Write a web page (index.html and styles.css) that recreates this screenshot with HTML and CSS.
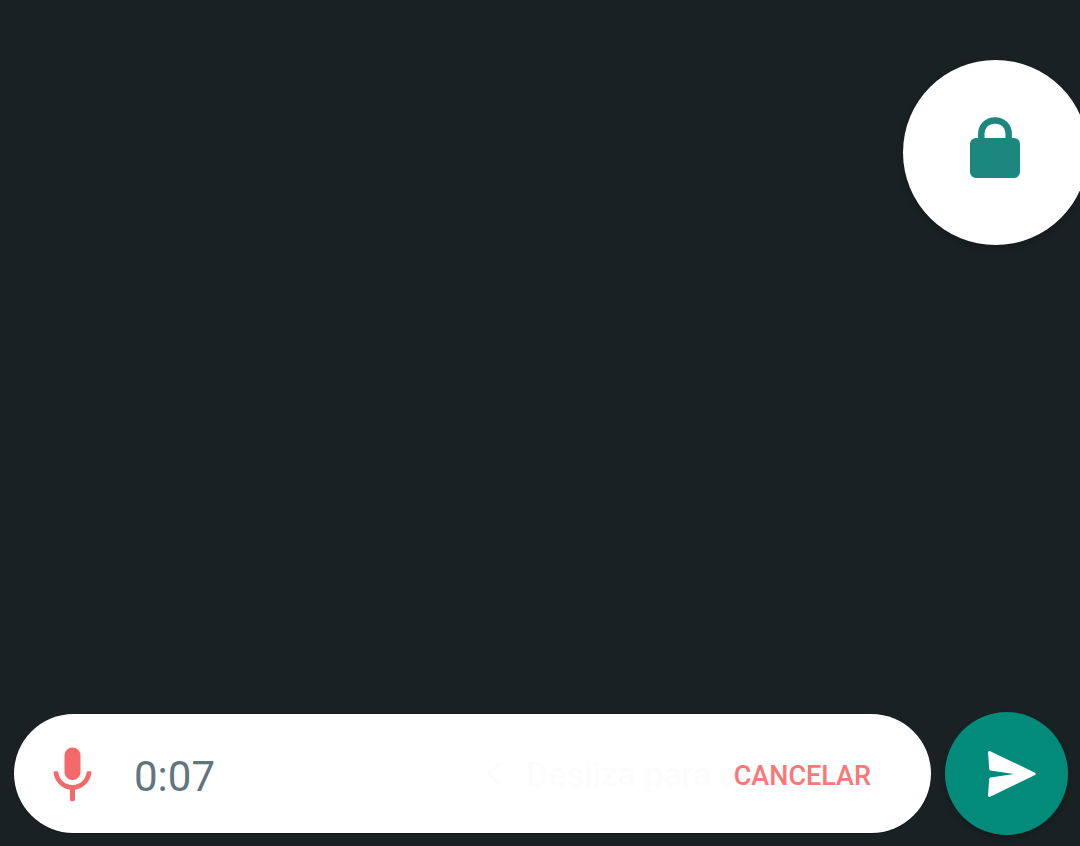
FILE: index.html
```html
<!DOCTYPE html>
<html lang="es">
<head>
<meta charset="utf-8">
<meta name="viewport" content="width=device-width, initial-scale=1">
<title>Nota de voz</title>
<link rel="stylesheet" href="styles.css">
</head>
<body>
<main class="chat">
  <button class="lock" type="button" aria-label="Bloquear grabación">
    <svg class="lock-icon" viewBox="0 0 52 62" aria-hidden="true">
      <path d="M11.300 22V17.500C11.300 9 17 3.500 25 3.500s13.700 5.500 13.700 14V22" fill="none" stroke="#1c877c" stroke-width="6.500"/>
      <rect y="21" width="50" height="40" rx="6" fill="#1c877c"/>
    </svg>
  </button>
  <footer class="recorder">
    <div class="bar">
      <svg class="mic-icon" viewBox="0 0 40 56" aria-hidden="true">
        <rect x="12.500" y="1.500" width="16" height="32.500" rx="7.800" fill="#f46a6b"/>
        <path d="M1.500 26.600q0-1.400 1.400-1.400h2q1.300 0 1.500 1.300C7.400 34 13 39 20.500 39S33.600 34 34.600 26.500q.2-1.300 1.500-1.300h2q1.400 0 1.400 1.400C38.500 35.500 31.700 42.600 23 43.800V53.500q0 1.700-1.600 1.700h-1.800q-1.600 0-1.600-1.700V43.800C9.300 42.600 2.500 35.500 1.500 26.600z" fill="#f46a6b"/>
      </svg>
      <time class="elapsed">0:07</time>
      <div class="actions">
        <span class="hint">
          <svg class="hint-icon" viewBox="0 0 16 26" aria-hidden="true"><path d="M14 2L3 13l11 11" fill="none" stroke="currentColor" stroke-width="3"/></svg>
          Desliza para cancelar
        </span>
        <button class="cancel" type="button">CANCELAR</button>
      </div>
    </div>
    <button class="send" type="button" aria-label="Enviar">
      <svg class="send-icon" viewBox="0 0 50 48" aria-hidden="true">
        <path d="M1 2.500Q1 .200 3.200 1.200L47.500 22.500Q50 24 47.500 25.200L3.200 46.700Q1 47.600 1 45.300L2.200 29Q2.300 27.700 3.500 27.500L27 24 3.500 20.500Q2.300 20.300 2.200 19z" fill="#fff"/>
      </svg>
    </button>
  </footer>
</main>
</body>
</html>
```
FILE: styles.css
```css
* { box-sizing: border-box; }

body {
  margin: 0;
  background: #192122;
  font-family: Roboto, "Liberation Sans", sans-serif;
}

button {
  margin: 0;
  padding: 0;
  border: 0;
  font: inherit;
  cursor: pointer;
}

.chat {
  min-height: 100vh;
  display: flex;
  flex-direction: column;
  justify-content: space-between;
  padding-top: 60px;
  overflow: hidden;
}

.lock {
  align-self: flex-end;
  display: flex;
  justify-content: center;
  width: 185px;
  height: 185px;
  margin-right: -8px;
  padding-top: 57px;
  border-radius: 50%;
  background: #fff;
  box-shadow: 0 3px 6px rgba(0, 0, 0, 0.2);
}

.lock-icon { width: 52px; height: 62px; }

.recorder {
  display: flex;
  align-items: center;
  gap: 14px;
  padding: 0 12px 11px 14px;
}

.bar {
  flex: 1;
  display: flex;
  align-items: center;
  height: 119px;
  padding: 0 60px 0 38px;
  border-radius: 60px;
  background: #fff;
  box-shadow: 0 1px 1px rgba(0, 0, 0, 0.3);
}

.mic-icon { width: 40px; height: 56px; }

.elapsed {
  margin-left: 42px;
  padding-top: 6px;
  color: #61757f;
  font-size: 42px;
  line-height: 48px;
}

.actions {
  position: relative;
  margin-left: auto;
  padding-top: 4px;
}

.cancel {
  position: relative;
  background: none;
  color: #f67879;
  font-size: 27px;
  font-weight: 500;
  line-height: 32px;
}

/* The fading swipe hint lies beneath the cancel button. */
.hint {
  position: absolute;
  top: -2px;
  right: 22px;
  display: flex;
  align-items: center;
  gap: 24px;
  color: #fcfcfc;
  font-size: 34px;
  line-height: 40px;
  white-space: nowrap;
}

.hint-icon { width: 16px; height: 26px; }

.send {
  display: flex;
  align-items: center;
  justify-content: center;
  width: 123px;
  height: 123px;
  padding-left: 10px;
  border-radius: 50%;
  background: #028a7b;
  box-shadow: 0 3px 5px rgba(0, 0, 0, 0.2);
}

.send-icon { width: 50px; height: 48px; }
```
